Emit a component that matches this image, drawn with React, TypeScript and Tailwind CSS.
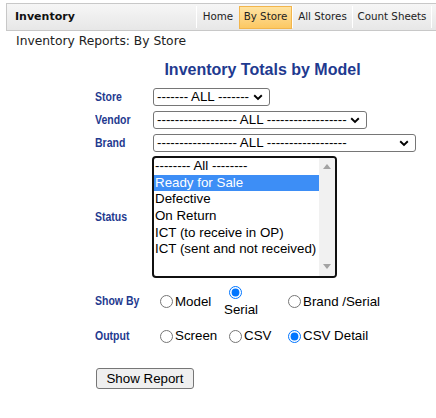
import React from "react";

const dashes = (n: number) => "-".repeat(n);

const navItems = [
  { label: "Home", width: "w-[42px]", active: false },
  { label: "By Store", width: "w-[53px]", active: true },
  { label: "All Stores", width: "w-[59px]", active: false },
  { label: "Count Sheets", width: "w-[78px]", active: false },
];

const statuses = [
  "-------- All --------",
  "Ready for Sale",
  "Defective",
  "On Return",
  "ICT (to receive in OP)",
  "ICT (sent and not received)",
];

function Separator() {
  return <div className="h-[22px] w-px border-r border-r-white bg-[#d2d2d2]" />;
}

function Chevron() {
  return (
    <svg width="10" height="7" viewBox="0 0 10 7" className="shrink-0">
      <path d="M1.2 1.3 5 5 8.8 1.3" fill="none" stroke="#000" strokeWidth="1.9" />
    </svg>
  );
}

function Dropdown({ width, text }: { width: string; text: string }) {
  return (
    <div
      className={`flex h-[18px] items-center justify-between rounded-[3px] border border-[#767676] bg-white pl-[3px] pr-[6px] ${width}`}
    >
      <span className="whitespace-nowrap text-[13.33px] leading-none text-black">{text}</span>
      <Chevron />
    </div>
  );
}

// the page uses a narrow bold face for the field labels
function Label({ children }: { children: React.ReactNode }) {
  return (
    <div className="w-[58px] shrink-0 text-[12.5px] leading-[15px]">
      <span className="inline-block origin-left scale-x-[0.84] whitespace-nowrap font-['Liberation_Sans',sans-serif] font-bold text-[#1f3a8f]">
        {children}
      </span>
    </div>
  );
}

function Radio({ name, checked }: { name: string; checked?: boolean }) {
  return (
    <input
      type="radio"
      name={name}
      defaultChecked={checked}
      className="ml-[5px] mr-[2px] h-[13px] w-[13px] shrink-0"
    />
  );
}

function Triangle({ up }: { up?: boolean }) {
  return (
    <svg width="8" height="5" viewBox="0 0 8 5">
      <path d={up ? "M0 5 4 0 8 5Z" : "M0 0 4 5 8 0Z"} fill="#a3a3a3" />
    </svg>
  );
}

export default function App() {
  return (
    <div className="h-[418px] w-[436px] overflow-hidden bg-white font-['Liberation_Sans',Arial,sans-serif] text-black">
      {/* top bar */}
      <div className="ml-[6px] mt-[3px] flex h-[28px] items-center border-y border-l border-[#c8c8c8] bg-gradient-to-b from-[#f6f6f6] to-[#e7e7e7] pr-[4px]">
        <span className="pl-[8px] font-['DejaVu_Sans',Verdana,sans-serif] text-[11px] font-bold text-[#111]">
          Inventory
        </span>
        <div className="ml-auto flex items-center">
          <Separator />
          {navItems.map((item, i) => (
            <React.Fragment key={item.label}>
              {item.active ? (
                <div
                  className={`flex h-[23px] items-center justify-center border border-[#f2b54c] bg-gradient-to-b from-[#fee3a2] to-[#fcc862] font-['DejaVu_Sans',Verdana,sans-serif] text-[10.3px] text-[#222] ${item.width}`}
                >
                  {item.label}
                </div>
              ) : (
                <div
                  className={`flex h-[23px] items-center justify-center font-['DejaVu_Sans',Verdana,sans-serif] text-[10.3px] text-[#222] ${item.width}`}
                >
                  {item.label}
                </div>
              )}
              {i > 0 && <Separator />}
            </React.Fragment>
          ))}
        </div>
      </div>

      <div className="mt-[3px] pl-[16px] font-['DejaVu_Sans',Verdana,sans-serif] text-[12.3px] leading-[15px] text-[#222]">
        Inventory Reports: By Store
      </div>

      <div className="ml-[95px] w-[335px]">
        <h1 className="mt-[11px] h-[20px] text-center text-[16px] font-bold leading-[20px] text-[#1f3a8f]">
          Inventory Totals by Model
        </h1>

        <div className="mt-[8px] flex flex-col gap-[5px]">
          <div className="flex items-center">
            <Label>Store</Label>
            <Dropdown width="w-[117px]" text={`${dashes(7)} ALL ${dashes(7)}`} />
          </div>
          <div className="flex items-center">
            <Label>Vendor</Label>
            <Dropdown width="w-[214px]" text={`${dashes(18)} ALL ${dashes(18)}`} />
          </div>
          <div className="flex items-center">
            <Label>Brand</Label>
            <Dropdown width="w-[263px]" text={`${dashes(18)} ALL ${dashes(18)}`} />
          </div>
        </div>

        <div className="mt-[4px] flex items-center">
          <Label>Status</Label>
          <div className="-ml-px flex h-[122px] w-[185px] overflow-hidden rounded-[4px] border-2 border-[#101010] bg-white">
            <div className="flex-1">
              {statuses.map((s, i) => (
                <div
                  key={s}
                  className={`h-[16.7px] whitespace-nowrap pl-[1px] text-[13.33px] leading-[16.7px] ${
                    i === 1 ? "bg-[#3d8ef6] text-white" : "text-black"
                  }`}
                >
                  {s}
                </div>
              ))}
            </div>
            <div className="flex w-[16px] flex-col items-center justify-between bg-[#f1f1f1] pb-[7px] pt-[6px]">
              <Triangle up />
              <Triangle />
            </div>
          </div>
        </div>

        <div className="mt-[6px] flex h-[35px] items-center text-[13.33px]">
          <div className="w-[60px] shrink-0">
            <Label>Show By</Label>
          </div>
          <label className="flex w-[69px] items-center">
            <Radio name="showby" />
            <span className="leading-[16px]">Model</span>
          </label>
          <label className="flex w-[59px] flex-col items-start">
            <Radio name="showby" checked />
            <span className="mt-[3px] leading-[16px]">Serial</span>
          </label>
          <label className="flex items-center">
            <Radio name="showby" />
            <span className="leading-[16px]">Brand /Serial</span>
          </label>
        </div>

        <div className="mt-[9px] flex h-[16px] items-center text-[13.33px]">
          <div className="w-[60px] shrink-0">
            <Label>Output</Label>
          </div>
          <label className="flex w-[69px] items-center">
            <Radio name="output" />
            <span className="leading-[16px]">Screen</span>
          </label>
          <label className="flex w-[59px] items-center">
            <Radio name="output" />
            <span className="leading-[16px]">CSV</span>
          </label>
          <label className="flex items-center">
            <Radio name="output" checked />
            <span className="leading-[16px]">CSV Detail</span>
          </label>
        </div>

        <button className="ml-px mt-[24px] h-[21px] w-[98px] rounded-[3px] border border-[#767676] bg-[#efefef] text-[13.33px] leading-none text-black">
          Show Report
        </button>
      </div>
    </div>
  );
}
